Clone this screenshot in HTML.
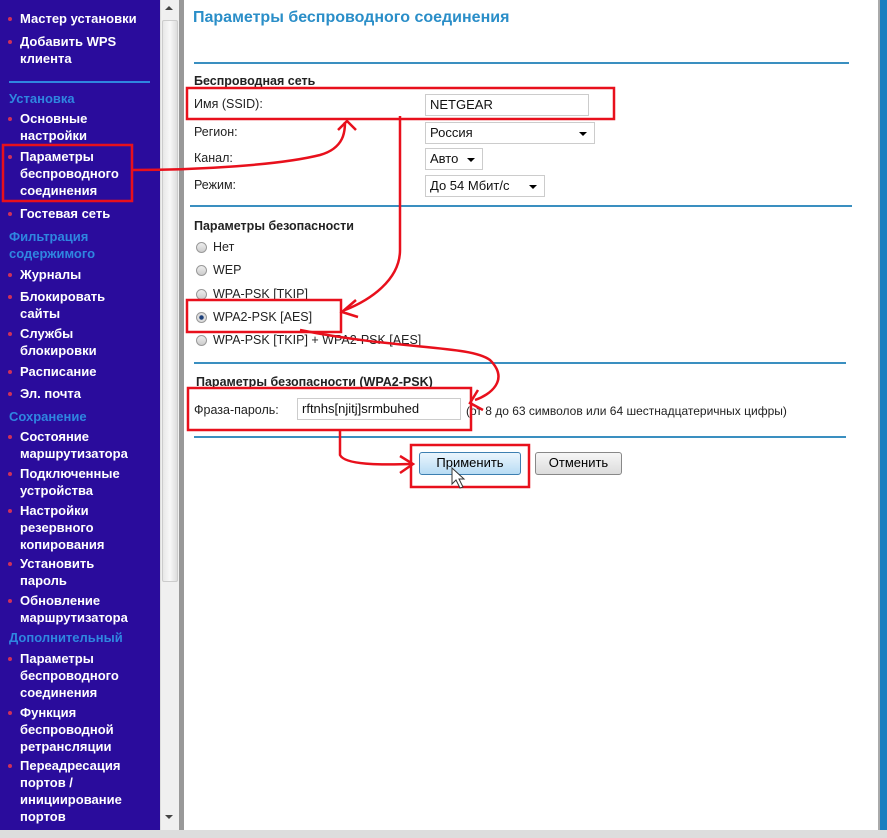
<!DOCTYPE html>
<html><head><meta charset="utf-8"><style>
body{margin:0;width:887px;height:838px;position:relative;overflow:hidden;background:#fff;font-family:"Liberation Sans",sans-serif}
#sb{position:absolute;left:0;top:0;width:160px;height:838px;background:#2a0c9c}
.s{position:absolute;left:20px;color:#fff;font-weight:bold;font-size:13px;line-height:17px;white-space:nowrap}
.s.b::before{content:"";position:absolute;left:-12px;top:7px;width:4px;height:4px;border-radius:50%;background:#d0305a}
.h{position:absolute;left:9px;color:#2f86e0;font-weight:bold;font-size:13px;line-height:17px}
.t{position:absolute;font-size:12.5px;color:#222;line-height:15px;white-space:nowrap}
.bd{font-weight:bold}
.hr{position:absolute;height:2px;background:#3a8fc0}
.inp{position:absolute;border:1px solid #ccc;background:#fff;font-size:13px;color:#111;box-sizing:border-box;padding-left:4px;line-height:20px;white-space:nowrap}
.sel::after{content:"";position:absolute;right:7px;top:9px;border:4px solid transparent;border-top:4px solid #000;border-bottom:0}
.rd{position:absolute;width:11px;height:11px;border-radius:50%;border:1px solid #999;background:linear-gradient(#eee,#ccc);box-sizing:border-box}
.btn{position:absolute;border:1px solid #888;border-radius:3px;font-size:13px;text-align:center;line-height:20px;box-sizing:border-box}
</style></head><body>
<div id="sb"></div>
<div style="position:absolute;left:160px;top:0;width:18px;height:830px;background:#f0f0f0;border-left:1px solid #ddd"></div>
<div style="position:absolute;left:162px;top:20px;width:14px;height:560px;background:linear-gradient(90deg,#e8e8e8,#f8f8f8,#ddd);border:1px solid #ccc;border-radius:2px"></div>
<div style="position:absolute;left:165px;top:6px;border:4px solid transparent;border-bottom:4px solid #444;border-top:0"></div>
<div style="position:absolute;left:165px;top:815px;border:4px solid transparent;border-top:4px solid #444;border-bottom:0"></div>
<div style="position:absolute;left:179px;top:0;width:5px;height:838px;background:#999"></div>
<div style="position:absolute;left:878px;top:0;width:2px;height:838px;background:#aaa"></div>
<div style="position:absolute;left:880px;top:0;width:7px;height:838px;background:#1a7fc0"></div>
<div style="position:absolute;left:0;top:830px;width:887px;height:8px;background:#ddd"></div>

<div class="s b" style="top:10px">Мастер установки</div>
<div class="s b" style="top:33px">Добавить WPS<br>клиента</div>
<div style="position:absolute;left:9px;top:81px;width:141px;height:2px;background:#2f86e0"></div>
<div class="h" style="top:90px">Установка</div>
<div class="s b" style="top:110px">Основные<br>настройки</div>
<div class="s b" style="top:148px">Параметры<br>беспроводного<br>соединения</div>
<div class="s b" style="top:205px">Гостевая сеть</div>
<div class="h" style="top:228px">Фильтрация<br>содержимого</div>
<div class="s b" style="top:266px">Журналы</div>
<div class="s b" style="top:288px">Блокировать<br>сайты</div>
<div class="s b" style="top:325px">Службы<br>блокировки</div>
<div class="s b" style="top:363px">Расписание</div>
<div class="s b" style="top:385px">Эл. почта</div>
<div class="h" style="top:408px">Сохранение</div>
<div class="s b" style="top:428px">Состояние<br>маршрутизатора</div>
<div class="s b" style="top:465px">Подключенные<br>устройства</div>
<div class="s b" style="top:502px">Настройки<br>резервного<br>копирования</div>
<div class="s b" style="top:555px">Установить<br>пароль</div>
<div class="s b" style="top:592px">Обновление<br>маршрутизатора</div>
<div class="h" style="top:629px">Дополнительный</div>
<div class="s b" style="top:650px">Параметры<br>беспроводного<br>соединения</div>
<div class="s b" style="top:704px">Функция<br>беспроводной<br>ретрансляции</div>
<div class="s b" style="top:757px">Переадресация<br>портов /<br>инициирование<br>портов</div>

<div style="position:absolute;left:193px;top:9px;font-size:16px;font-weight:bold;color:#2a8ec8">Параметры беспроводного соединения</div>
<div class="hr" style="left:194px;top:62px;width:655px"></div>
<div class="t bd" style="left:194px;top:74px">Беспроводная сеть</div>
<div class="t" style="left:194px;top:97px">Имя (SSID):</div>
<div class="inp" style="left:425px;top:94px;width:164px;height:22px">NETGEAR</div>
<div class="t" style="left:194px;top:125px">Регион:</div>
<div class="inp sel" style="left:425px;top:122px;width:170px;height:22px">Россия</div>
<div class="t" style="left:194px;top:151px">Канал:</div>
<div class="inp sel" style="left:425px;top:148px;width:58px;height:22px">Авто</div>
<div class="t" style="left:194px;top:178px">Режим:</div>
<div class="inp sel" style="left:425px;top:175px;width:120px;height:22px">До 54 Мбит/с</div>
<div class="hr" style="left:190px;top:205px;width:662px"></div>
<div class="t bd" style="left:194px;top:219px">Параметры безопасности</div>
<div class="rd" style="left:196px;top:242px"></div><div class="t" style="left:213px;top:240px">Нет</div>
<div class="rd" style="left:196px;top:265px"></div><div class="t" style="left:213px;top:263px">WEP</div>
<div class="rd" style="left:196px;top:289px"></div><div class="t" style="left:213px;top:287px">WPA-PSK [TKIP]</div>
<div class="rd" style="left:196px;top:312px;background:radial-gradient(circle,#1c3f7a 30%,#ddd 40%)"></div><div class="t" style="left:213px;top:310px">WPA2-PSK [AES]</div>
<div class="rd" style="left:196px;top:335px"></div><div class="t" style="left:213px;top:333px">WPA-PSK [TKIP] + WPA2-PSK [AES]</div>
<div class="hr" style="left:194px;top:362px;width:652px"></div>
<div class="t bd" style="left:196px;top:375px">Параметры безопасности (WPA2-PSK)</div>
<div class="t" style="left:194px;top:403px">Фраза-пароль:</div>
<div class="inp" style="left:297px;top:398px;width:164px;height:22px">rftnhs[njitj]srmbuhed</div>
<div class="t" style="left:466px;top:404px;font-size:12px">(от 8 до 63 символов или 64 шестнадцатеричных цифры)</div>
<div class="hr" style="left:194px;top:436px;width:652px"></div>
<div class="btn" style="left:419px;top:452px;width:102px;height:23px;background:linear-gradient(#eaf5fd,#b8dcf4);border-color:#3c7fb1">Применить</div>
<div class="btn" style="left:535px;top:452px;width:87px;height:23px;background:linear-gradient(#f6f6f6,#dcdcdc)">Отменить</div>

<svg style="position:absolute;left:0;top:0" width="887" height="838">
<g fill="none" stroke="#e8101c" stroke-width="2.5">
<rect x="3" y="145" width="129" height="56"/>
<rect x="187" y="88" width="427" height="31"/>
<rect x="187" y="300" width="154" height="32"/>
<rect x="188" y="388" width="283" height="42"/>
<rect x="411" y="445" width="118" height="42"/>
<path d="M132 170 C200 170 280 165 320 155 C345 148 345 130 345 122"/>
<path d="M338 130 L347 121 L356 130"/>
<path d="M400 116 L400 250 C400 280 370 300 345 310"/>
<path d="M356 300 L342 312 L358 317"/>
<path d="M300 330 C400 350 470 345 490 360 C510 380 490 395 475 400"/>
<path d="M478 390 L470 403 L483 410"/>
<path d="M340 430 L340 455 C345 465 380 465 412 464"/>
<path d="M400 456 L413 464 L400 473"/>
</g>
<path d="M452 468 L452 484 L456 480 L460 488 L463 487 L459 479 L464 479 Z" fill="#fff" stroke="#333" stroke-width="1"/>
</svg>
</body></html>
